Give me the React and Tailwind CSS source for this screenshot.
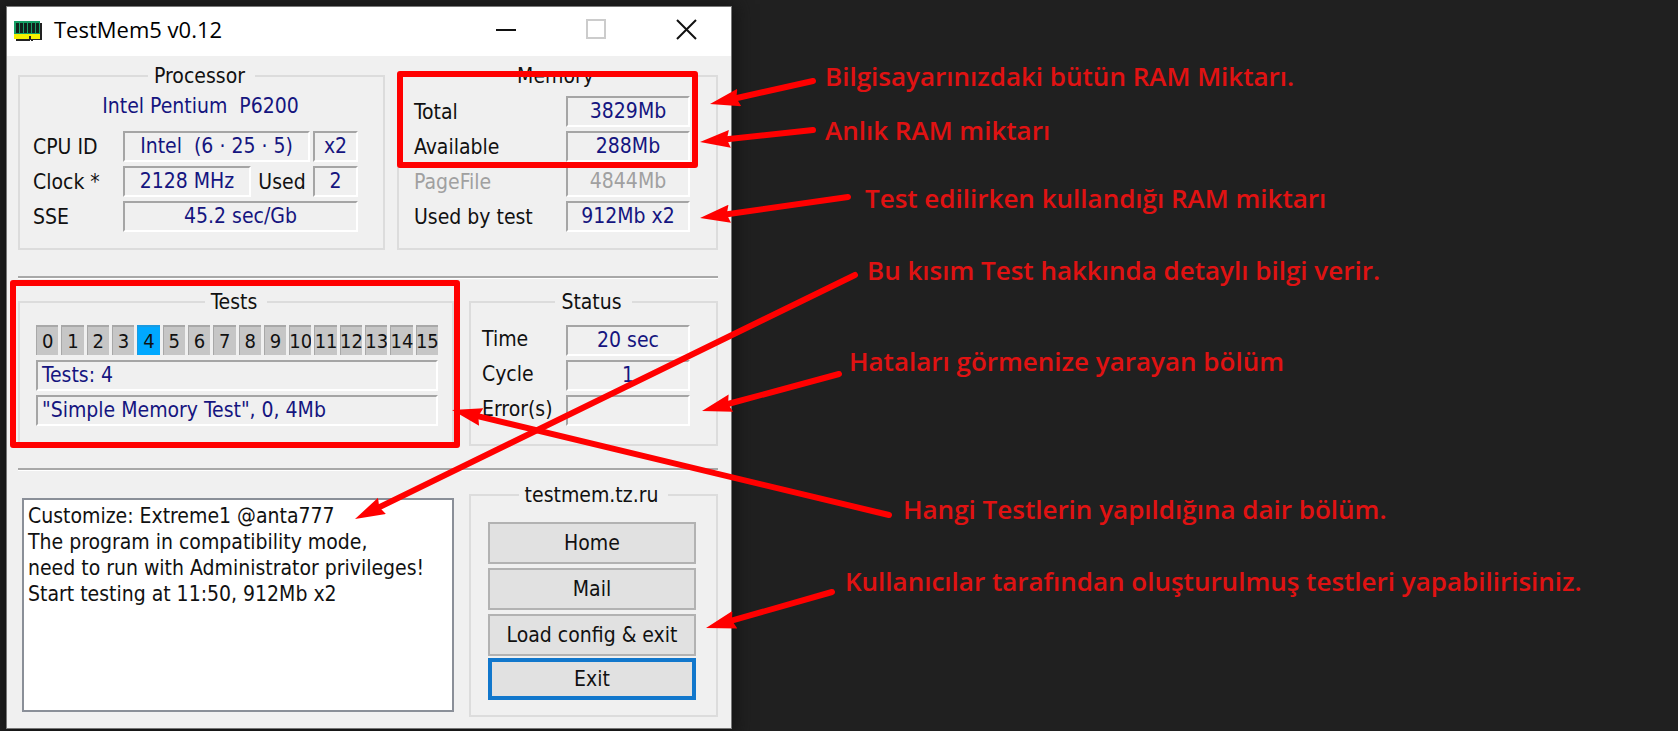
import clsx from 'clsx';

const processorTests = Array.from({ length: 16 }, (_, i) => i);
const ACTIVE_TEST = 4;

const logText = `Customize: Extreme1 @anta777
The program in compatibility mode,
need to run with Administrator privileges!
Start testing at 11:50, 912Mb x2`;

const notes = [
  { text: 'Bilgisayarınızdaki bütün RAM Miktarı.', place: 'mt-[60px] ml-[93px]' },
  { text: 'Anlık RAM miktarı', place: 'mt-[22px] ml-[93px]' },
  { text: 'Test edilirken kullandığı RAM miktarı', place: 'mt-9 ml-[133px]' },
  { text: 'Bu kısım Test hakkında detaylı bilgi verir.', place: 'mt-10 ml-[135px]' },
  { text: 'Hataları görmenize yarayan bölüm', place: 'mt-[59px] ml-[117px]' },
  { text: 'Hangi Testlerin yapıldığına dair bölüm.', place: 'mt-[116px] ml-[171px]' },
  { text: 'Kullanıcılar tarafından oluşturulmuş testleri yapabilirisiniz.', place: 'mt-10 ml-[113px]' },
];

// from = tail, to = tip of the arrow head
const arrows = [
  { from: [813, 81], to: [710, 104] },
  { from: [813, 130], to: [700, 142] },
  { from: [848, 197], to: [700, 218] },
  { from: [855, 275], to: [355, 519] },
  { from: [839, 374], to: [702, 411] },
  { from: [889, 515], to: [452, 410] },
  { from: [832, 592], to: [706, 628] },
];

const GroupBox = ({ title, className, children }) => (
  <fieldset className={clsx('min-w-0 border-2 border-[#dcdcdc]', className)}>
    <legend className="mx-auto pr-2.5 pl-1.5 leading-6">{title}</legend>
    {children}
  </fieldset>
);

const Field = ({ children, className }) => (
  <output
    className={clsx(
      'block h-[31px] overflow-hidden border-2 border-t-[#a5a5a5] border-r-white border-b-white border-l-[#a5a5a5] leading-[27px] whitespace-pre text-[#15157f]',
      className || 'text-center'
    )}
  >
    {children}
  </output>
);

const Row = ({ label, value, muted, labelClass = 'pt-1' }) => (
  <label className={clsx('flex', muted && 'text-[#a0a0a0]')}>
    <span className={clsx('flex-1 leading-6 whitespace-nowrap', labelClass)}>{label}</span>
    <Field className={clsx('w-[124px] text-center', muted && 'text-[#a0a0a0]!')}>{value}</Field>
  </label>
);

const Divider = ({ className }) => (
  <hr className={clsx('h-[3px] border-0 border-t-2 border-b border-t-[#a8a8a8] border-b-white', className)} />
);

const PushButton = ({ children, focused }) => (
  <button
    type="button"
    className={clsx(
      'h-[42px] w-full bg-[#e1e1e1] leading-6',
      focused ? '-mt-0.5 border-4 border-[#1177cc]' : 'border-2 border-[#b2b2b2]'
    )}
  >
    {children}
  </button>
);

const MemoryIcon = () => (
  <svg width="28" height="20" viewBox="0 0 28 20" aria-hidden="true">
    <path d="M2 2H28V19H19V20H17V19H16V20H2Z" fill="#222" />
    <rect width="26" height="14" fill="#16a066" />
    <path d="M2 2H5V12H2ZM6 2H9V12H6ZM10 2H13V12H10ZM14 2H17V12H14ZM18 2H21V12H18ZM22 2H25V12H22Z" fill="#10231c" />
    <path d="M0 13H26V18H17V15H15V18H0Z" fill="#f4f000" />
  </svg>
);

const TitleBar = () => (
  <header className="flex h-[49px] items-center bg-white pr-[34px] pb-px pl-[7px] text-black">
    <MemoryIcon />
    <h1 className="ml-3 flex-1 pb-1 font-['Open_Sans','Noto_Sans',sans-serif] text-[22px] leading-7">
      TestMem5 v0.12
    </h1>
    <div className="flex items-center gap-[69px] pb-1">
      <button type="button" aria-label="Minimize">
        <svg width="21" height="21" className="block">
          <path d="M0 11H20" stroke="#111" strokeWidth="2" />
        </svg>
      </button>
      <button type="button" aria-label="Maximize" disabled>
        <svg width="21" height="21" className="block">
          <rect x="1" y="1" width="18" height="18" fill="none" stroke="#ccc" strokeWidth="2" />
        </svg>
      </button>
      <button type="button" aria-label="Close">
        <svg width="21" height="21" className="block">
          <path d="M1 1L20 20M20 1L1 20" stroke="#111" strokeWidth="2" />
        </svg>
      </button>
    </div>
  </header>
);

const TestMemWindow = () => (
  <section className="mt-[6px] ml-[6px] w-[726px] shrink-0 self-start border border-[#777] bg-[#f0f0f0] font-['DejaVu_Sans_Condensed','Noto_Sans',sans-serif] text-[21px] text-[#111] shadow-[0_2px_16px_4px_#141414]">
    <TitleBar />
    <div className="pt-2 pr-[13px] pb-[11px] pl-[11px]">
      <div className="flex gap-3">
        <GroupBox title="Processor" className="w-[367px]">
          <div className="grid gap-1 pt-2 pr-[25px] pb-4 pl-[13px]">
            <p className="h-[31px] pl-2.5 text-center leading-5 whitespace-pre text-[#15157f]">
              Intel Pentium  P6200
            </p>
            <div className="flex">
              <span className="w-[90px] pt-1 leading-6">CPU ID</span>
              <Field className="mr-[3px] flex-1 text-center">{'Intel  (6 · 25 · 5)'}</Field>
              <Field className="w-[45px] text-center">x2</Field>
            </div>
            <div className="flex">
              <span className="w-[90px] pt-1 leading-6">Clock *</span>
              <Field className="w-[128px] text-center">2128 MHz</Field>
              <span className="flex-1 pt-1 text-center leading-6">Used</span>
              <Field className="w-[45px] text-center">2</Field>
            </div>
            <label className="flex">
              <span className="w-[90px] pt-1 leading-6">SSE</span>
              <Field className="flex-1 text-center">45.2 sec/Gb</Field>
            </label>
          </div>
        </GroupBox>
        <GroupBox title="Memory" className="flex-1">
          <div className="grid gap-1 pt-2 pr-[26px] pb-4 pl-[15px]">
            <Row label="Total" value="3829Mb" />
            <Row label="Available" value="288Mb" />
            <Row label="PageFile" value="4844Mb" muted />
            <Row label="Used by test" value="912Mb x2" />
          </div>
        </GroupBox>
      </div>

      <Divider className="mt-[26px]" />

      <div className="mt-[11px] flex gap-[15px]">
        <GroupBox title="Tests" className="flex-1">
          <div className="grid gap-1 pt-[11px] pr-[14px] pb-[18px] pl-4">
            <ol className="grid grid-cols-16 gap-[3px] text-[20px]">
              {processorTests.map((n) => (
                <li
                  key={n}
                  className={clsx(
                    'flex h-[30px] items-center justify-center overflow-hidden border-t-2 border-l',
                    n === ACTIVE_TEST
                      ? 'border-[#1b9ae0] bg-[#00a8ff]'
                      : 'border-[#a8a8a8] bg-[#c6c6c6]'
                  )}
                >
                  {n}
                </li>
              ))}
            </ol>
            <Field className="mt-px pl-1">Tests: 4</Field>
            <Field className="pl-1">"Simple Memory Test", 0, 4Mb</Field>
          </div>
        </GroupBox>
        <GroupBox title="Status" className="w-[249px]">
          <div className="grid gap-1 pt-[11px] pr-[26px] pb-[18px] pl-[11px]">
            <Row label="Time" value="20 sec" labelClass="pt-0.5" />
            <Row label="Cycle" value="1" labelClass="pt-0.5" />
            <Row label="Error(s)" value="" labelClass="pt-0.5" />
          </div>
        </GroupBox>
      </div>

      <Divider className="mt-[22px]" />

      <div className="mt-3 flex gap-[15px]">
        <textarea
          readOnly
          aria-label="Log"
          defaultValue={logText}
          className="mt-[15px] mb-[5px] ml-1 min-w-0 flex-1 resize-none border-2 border-[#8a8f98] bg-white px-1 py-[3px] leading-[26px] outline-none"
        />
        <GroupBox title="testmem.tz.ru" className="w-[249px]">
          <div className="grid gap-1 pt-[15px] pr-5 pb-[15px] pl-[17px]">
            <PushButton>Home</PushButton>
            <PushButton>Mail</PushButton>
            <PushButton>Load config &amp; exit</PushButton>
            <PushButton focused>Exit</PushButton>
          </div>
        </GroupBox>
      </div>
    </div>
  </section>
);

// Red marks drawn on top of the window and the canvas behind it
const Markup = () => (
  <svg
    className="pointer-events-none absolute top-0 left-0 overflow-visible"
    width="1000"
    height="731"
    aria-hidden="true"
  >
    <defs>
      <marker
        id="head"
        markerUnits="userSpaceOnUse"
        markerWidth="32"
        markerHeight="20"
        refX="30"
        refY="9"
        orient="auto"
      >
        <path d="M0 0L30 9L0 18L3 9Z" fill="#f00" />
      </marker>
    </defs>
    <g fill="none" stroke="#f00" strokeWidth="6" strokeLinejoin="round">
      <rect x="400" y="74" width="295" height="91" />
      <rect x="13" y="283" width="444" height="162" />
    </g>
    {arrows.map(({ from, to }) => {
      const dx = to[0] - from[0];
      const dy = to[1] - from[1];
      const len = Math.hypot(dx, dy);
      // stop the shaft inside the head so its round cap stays hidden
      const end = [to[0] - (dx / len) * 22, to[1] - (dy / len) * 22];
      return (
        <g key={from.join()} stroke="#f00">
          <path
            d={`M${from[0]} ${from[1]}L${end[0]} ${end[1]}`}
            strokeWidth="6"
            strokeLinecap="round"
          />
          <path
            d={`M${from[0]} ${from[1]}L${to[0]} ${to[1]}`}
            stroke="none"
            fill="none"
            markerEnd="url(#head)"
          />
        </g>
      );
    })}
  </svg>
);

export default function App() {
  return (
    <main className="relative flex min-h-screen overflow-hidden bg-[#202020]">
      <TestMemWindow />
      <ul className="font-['Open_Sans','Noto_Sans',sans-serif] text-[26px] leading-8 font-semibold text-[#e01212]">
        {notes.map((note) => (
          <li key={note.text} className={clsx('whitespace-nowrap', note.place)}>
            {note.text}
          </li>
        ))}
      </ul>
      <Markup />
    </main>
  );
}
